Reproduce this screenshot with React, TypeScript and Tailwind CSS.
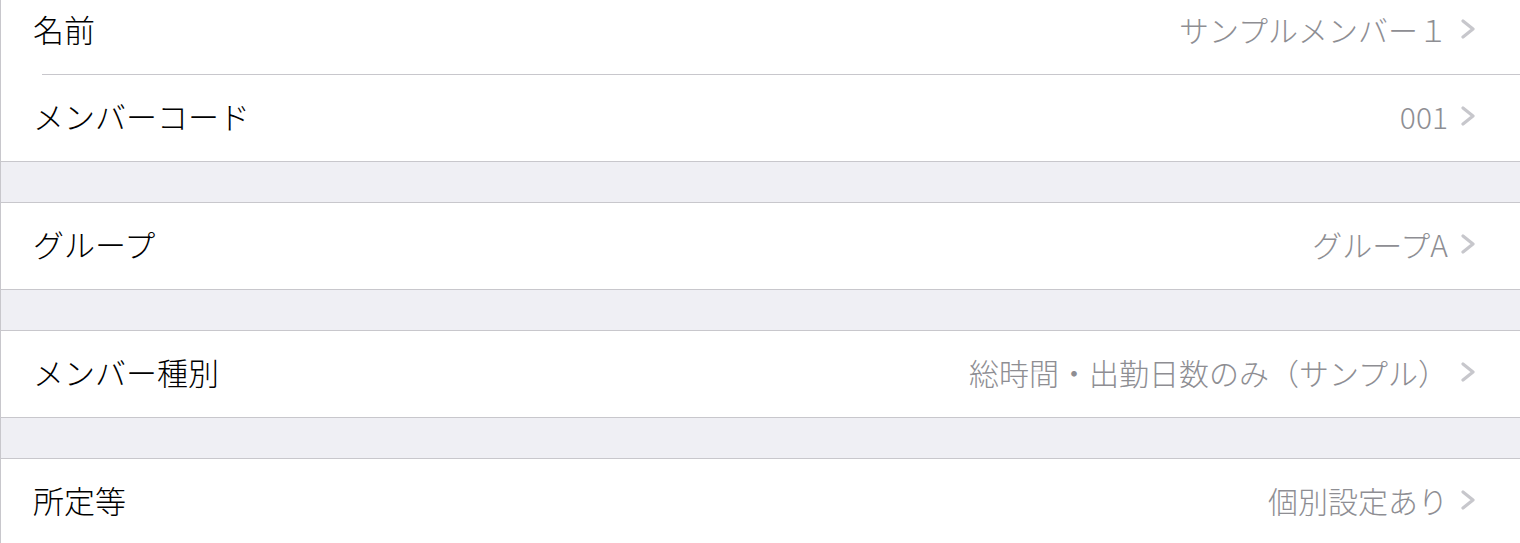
import React from "react";

function Chevron() {
  return (
    <svg width="18" height="20" viewBox="0 0 18 20" className="shrink-0 ml-[12px]">
      <path d="M3 2 L13 10 L3 18" fill="none" stroke="#c7c7cc" strokeWidth="3.2" strokeLinecap="round" strokeLinejoin="round" />
    </svg>
  );
}

function Row({ label, value }: { label: string; value: string }) {
  return (
    <div className="flex items-center h-[86px] pl-[32px] pr-[42px] pb-[5px]">
      <span className="text-[31px] text-black leading-none font-light">{label}</span>
      <span className="ml-auto text-[30px] text-[#8e8e93] leading-none font-light">{value}</span>
      <Chevron />
    </div>
  );
}

export default function App() {
  return (
    <div
      className="w-[1520px] h-[543px] overflow-hidden bg-[#efeff4] border-l border-[#c8c7cc]"
      style={{ fontFamily: '"Noto Sans CJK JP", "Noto Sans", sans-serif' }}
    >
      <div className="-mt-[12px] bg-white border-b border-[#c8c7cc]">
        <Row label="名前" value="サンプルメンバー１" />
        <div className="h-px bg-[#c8c7cc] ml-[41px]" />
        <Row label="メンバーコード" value="001" />
      </div>
      <div className="h-[40px]" />
      <div className="bg-white border-y border-[#c8c7cc]">
        <Row label="グループ" value="グループA" />
      </div>
      <div className="h-[40px]" />
      <div className="bg-white border-y border-[#c8c7cc]">
        <Row label="メンバー種別" value="総時間・出勤日数のみ（サンプル）" />
      </div>
      <div className="h-[40px]" />
      <div className="bg-white border-t border-[#c8c7cc]">
        <Row label="所定等" value="個別設定あり" />
      </div>
    </div>
  );
}
